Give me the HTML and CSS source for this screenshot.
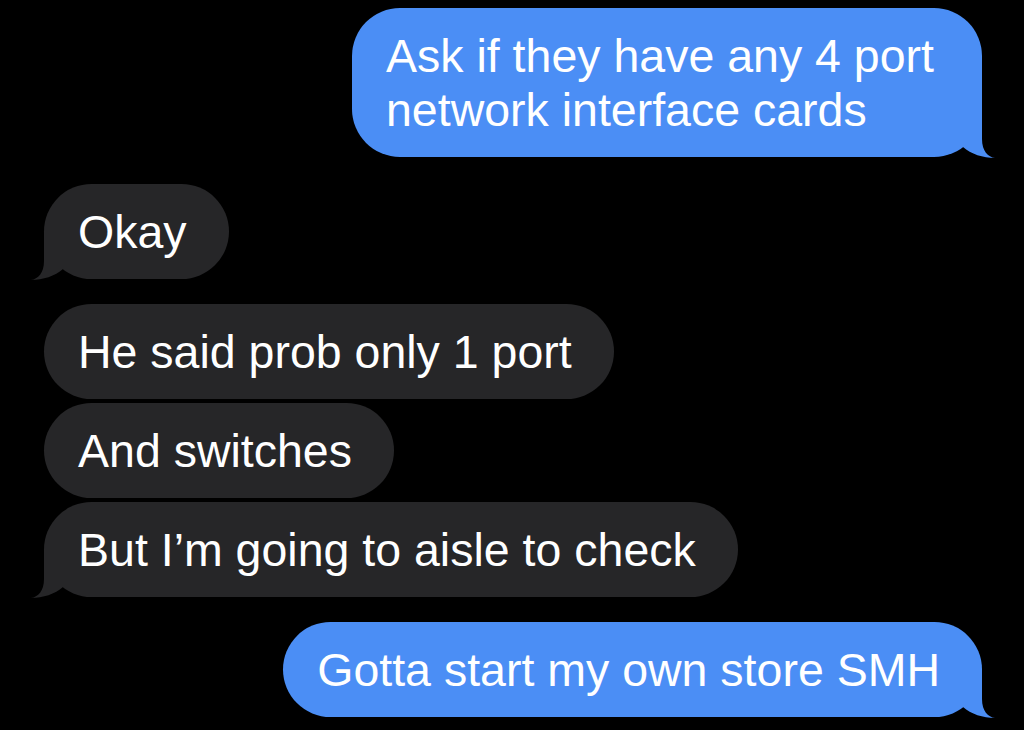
FILE: index.html
```html
<!DOCTYPE html>
<html lang="en">
<head>
<meta charset="utf-8">
<title>Messages</title>
<link rel="stylesheet" href="styles.css">
</head>
<body>
<main class="thread">
  <div class="bubble sent tail b-first wrap">Ask if they have any 4 port network interface cards<svg class="tail-svg" viewBox="0 0 36 50" width="36" height="50" aria-hidden="true"><path d="M2 0 L21 0 L21 30 C21 42 27 48 34 49 C22 49 10 45 2 38 Z"/></svg></div>
  <div class="bubble received tail gap-big">Okay<svg class="tail-svg" viewBox="0 0 36 50" width="36" height="50" aria-hidden="true"><path d="M2 0 L21 0 L21 30 C21 42 27 48 34 49 C22 49 10 45 2 38 Z"/></svg></div>
  <div class="bubble received gap-big">He said prob only 1 port</div>
  <div class="bubble received gap-small">And switches</div>
  <div class="bubble received tail gap-small">But I’m going to aisle to check<svg class="tail-svg" viewBox="0 0 36 50" width="36" height="50" aria-hidden="true"><path d="M2 0 L21 0 L21 30 C21 42 27 48 34 49 C22 49 10 45 2 38 Z"/></svg></div>
  <div class="bubble sent tail gap-big">Gotta start my own store SMH<svg class="tail-svg" viewBox="0 0 36 50" width="36" height="50" aria-hidden="true"><path d="M2 0 L21 0 L21 30 C21 42 27 48 34 49 C22 49 10 45 2 38 Z"/></svg></div>
</main>
</body>
</html>
```
FILE: styles.css
```css
html, body {
  margin: 0;
  padding: 0;
  background: #000;
}

body {
  width: 1024px;
  height: 730px;
  overflow: hidden;
  font-family: "Liberation Sans", Arial, sans-serif;
}

.thread {
  display: flex;
  flex-direction: column;
  padding-top: 8px;
}

.bubble {
  position: relative;
  box-sizing: border-box;
  max-width: 780px;
  padding: 21px 42px 20px 34px;
  border-radius: 48px;
  font-size: 46.5px;
  line-height: 54px;
  color: #fff;
  white-space: nowrap;
}

.bubble.wrap {
  max-width: 630px;
  white-space: normal;
}

.sent {
  align-self: flex-end;
  margin-right: 42px;
  background: #4b8ef5;
  fill: #4b8ef5;
}

.received {
  align-self: flex-start;
  margin-left: 44px;
  background: #262628;
  fill: #262628;
}

.gap-big {
  margin-top: 25px;
}

.b-first + .gap-big {
  margin-top: 27px;
}

.gap-small {
  margin-top: 4px;
}

.tail-svg {
  position: absolute;
  bottom: -2px;
  display: block;
}

.sent .tail-svg {
  right: -15px;
}

.received .tail-svg {
  left: -15px;
  transform: scaleX(-1);
}
```
